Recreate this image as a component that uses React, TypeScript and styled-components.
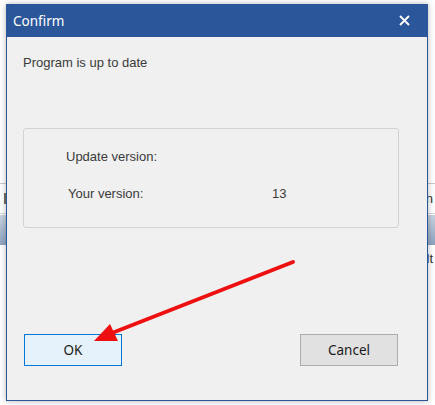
import React from "react";
import styled, { createGlobalStyle } from "styled-components";

const Global = createGlobalStyle`
  html, body { margin: 0; padding: 0; background: #ffffff; }
  body { width: 435px; height: 405px; overflow: hidden; font-family: "Liberation Sans", Arial, sans-serif; }
`;

const Page = styled.div`
  position: relative;
  width: 435px;
  height: 405px;
  overflow: hidden;
  background: #ffffff;
`;

/* Background application (partially hidden by the modal) */
const AppBehind = styled.div`
  padding-top: 183px;
  display: flex;
  flex-direction: column;
`;

const AppRow = styled.div<{ $h: number; $borders?: boolean }>`
  height: ${(p) => p.$h}px;
  display: flex;
  align-items: center;
  justify-content: space-between;
  padding: 0 2px 0 4px;
  border-top: ${(p) => (p.$borders ? "1px solid #c9c9c9" : "none")};
  border-bottom: ${(p) => (p.$borders ? "1px solid #d6d6d6" : "none")};
  font-size: 13px;
  color: #333;
`;

const AppBand = styled.div`
  height: 30px;
  margin-top: 1px;
  background: linear-gradient(#c8d3e0, #8ea3bf);
`;

const Mark = styled.span`
  width: 2px;
  height: 11px;
  background: #7a7060;
`;

/* Modal dialog */
const Dialog = styled.div`
  position: absolute;
  left: 6px;
  top: 4px;
  width: 420px;
  height: 395px;
  border: 1px solid #2b579a;
  background: #f0f0f0;
  box-shadow: 0 0 6px rgba(0, 0, 0, 0.3);
  display: flex;
  flex-direction: column;
`;

const TitleBar = styled.div`
  height: 31px;
  background: #2b579a;
  display: flex;
  align-items: center;
  justify-content: space-between;
  padding: 0 17px 1px 6px;
  color: #ffffff;
  font-family: "Noto Sans", "Open Sans", sans-serif;
  font-size: 13.5px;
`;

const Body = styled.div`
  flex: 1;
  display: flex;
  flex-direction: column;
  padding: 0 0 0 16px;
  color: #3a3a3a;
  font-size: 13px;
`;

const Message = styled.div`
  margin-top: 18px;
  line-height: 16px;
`;

const Group = styled.div`
  margin-top: 57px;
  width: 376px;
  height: 100px;
  border: 1px solid #d3d3d3;
  border-radius: 3px;
  padding: 20px 0 0 42px;
  box-sizing: border-box;
  display: grid;
  grid-template-columns: 206px auto;
  grid-auto-rows: 16px;
  row-gap: 21px;
  align-items: center;
`;

const Label = styled.span<{ $shift?: number }>`
  line-height: 16px;
  padding-left: ${(p) => p.$shift ?? 0}px;
`;

const Buttons = styled.div`
  margin-top: 106px;
  width: 374px;
  display: flex;
  justify-content: space-between;
  padding-left: 1px;
`;

const Button = styled.button<{ $primary?: boolean }>`
  width: 98px;
  height: 32px;
  box-sizing: border-box;
  border: 1px solid ${(p) => (p.$primary ? "#0078d7" : "#adadad")};
  background: ${(p) => (p.$primary ? "#e5f1fb" : "#e1e1e1")};
  font-family: "Noto Sans", "Open Sans", sans-serif;
  font-size: 13.5px;
  color: #1a1a1a;
  padding: 0;
  margin: 0;
`;

const Overlay = styled.svg`
  position: absolute;
  left: 0;
  top: 0;
  pointer-events: none;
`;

export default function App() {
  return (
    <Page>
      <Global />
      <AppBehind>
        <AppRow $h={29} $borders>
          <Mark />
          <span>Domain</span>
        </AppRow>
        <AppBand />
        <AppRow $h={26}>
          <span />
          <span>Default</span>
        </AppRow>
      </AppBehind>

      <Dialog>
        <TitleBar>
          <span>Confirm</span>
          <svg width="11" height="11" viewBox="0 0 11 11">
            <path d="M1 1 L10 10 M10 1 L1 10" stroke="#fff" strokeWidth="1.8" />
          </svg>
        </TitleBar>
        <Body>
          <Message>Program is up to date</Message>
          <Group>
            <Label>Update version:</Label>
            <Label />
            <Label $shift={2}>Your version:</Label>
            <Label>13</Label>
          </Group>
          <Buttons>
            <Button $primary>OK</Button>
            <Button>Cancel</Button>
          </Buttons>
        </Body>
      </Dialog>

      <Overlay width="435" height="405" viewBox="0 0 435 405">
        <line x1="293" y1="262" x2="112" y2="333" stroke="#ee1010" strokeWidth="4" strokeLinecap="round" />
        <polygon points="94,341 118,341 110,324" fill="#ee1010" />
      </Overlay>
    </Page>
  );
}
